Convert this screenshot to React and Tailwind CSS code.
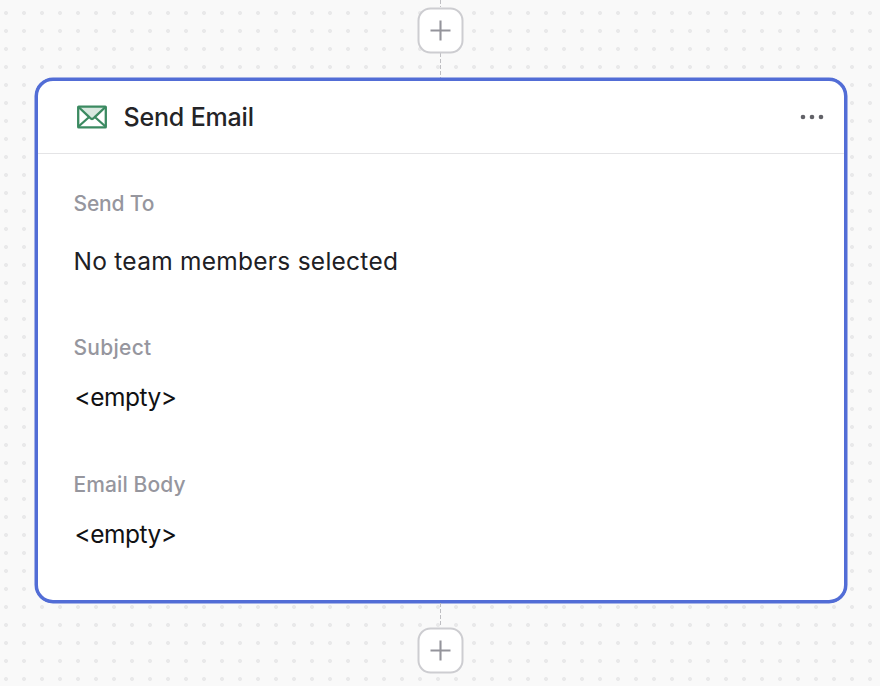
const fields = [
  {
    label: 'Send To',
    value: 'No team members selected',
    labelClass: 'tracking-[-0.15px]',
    valueClass: 'mt-[30px] tracking-[0.26px] text-[#202024]',
  },
  {
    label: 'Subject',
    value: '<empty>',
    labelClass: 'mt-[58px] tracking-[0.28px]',
    valueClass: 'mt-[22px] pl-px tracking-[-0.5px] text-[#111113]',
  },
  {
    label: 'Email Body',
    value: '<empty>',
    labelClass: 'mt-[59px] tracking-[0.1px]',
    valueClass: 'mt-[22px] pl-px tracking-[-0.5px] text-[#111113]',
  },
]

function AddButton() {
  return (
    <button className="flex h-[46px] w-[46px] shrink-0 translate-x-[-0.5px] translate-y-[0.5px] items-center justify-center rounded-[13px] border-2 border-[#cdcdd1] bg-white">
      <svg width="22" height="22" viewBox="0 0 22 22" fill="none" stroke="#94949b" strokeWidth="2.1">
        <path d="M11 1v20M1 11h20" />
      </svg>
    </button>
  )
}

function MailIcon() {
  return (
    <svg width="30" height="24" viewBox="0 0 30 24" fill="none" stroke="#3b8a61" strokeWidth="2.3">
      <path d="M2 2h26L15 14z" fill="#d8e8df" stroke="none" />
      <rect x="1.2" y="1.6" width="27.6" height="20.8" rx="0.5" />
      <path d="M1.5 2L12.5 12.4Q15 15.6 17.5 12.4L28.5 2M1.5 21.5L11.6 12.5M28.5 21.5L18.4 12.5" />
    </svg>
  )
}

function Connector({ className }) {
  return (
    <svg width="1" className={className} stroke="#bebec2" strokeDasharray="4 2">
      <path d="M0.5 0v40" />
    </svg>
  )
}

export default function App() {
  return (
    <div className="flex h-[686px] w-[880px] flex-col items-center overflow-hidden bg-[#f9f9f9] bg-[radial-gradient(circle_at_center,#e9e9ea_1.7px,transparent_2.3px)] bg-[size:18px_18px] bg-[position:-3px_4px] pl-px font-['Inter',sans-serif]">
      <Connector className="h-[7px] shrink-0" />
      <AddButton />
      <Connector className="h-[25px] shrink-0" />

      <div className="h-[525px] w-[812px] shrink-0 rounded-[18px] border-[3px] border-[#526dd6] bg-white shadow-[0_0_0_0.5px_#526dd6]">
        <div className="flex h-[73px] items-center border-b border-[#e4e4e6] pr-5 pl-[39px]">
          <MailIcon />
          <h1 className="ml-[17px] text-[25px] leading-8 font-medium tracking-[-0.17px] text-[#242427]">Send Email</h1>
          <svg className="ml-auto" width="24" height="6" viewBox="0 0 24 6" fill="#626268">
            <circle cx="3" cy="3" r="2.3" />
            <circle cx="12" cy="3" r="2.3" />
            <circle cx="21" cy="3" r="2.3" />
          </svg>
        </div>

        <div className="flex flex-col px-9 pt-9">
          {fields.map((field) => (
            <div key={field.label}>
              <div className={`h-7 w-fit text-[21px] leading-7 font-medium text-[#96969e] ${field.labelClass}`}>{field.label}</div>
              <div className={`h-7 w-fit text-[24.5px] leading-[26px] ${field.valueClass}`}>{field.value}</div>
            </div>
          ))}
        </div>
      </div>

      <Connector className="h-6 shrink-0" />
      <AddButton />
    </div>
  )
}
